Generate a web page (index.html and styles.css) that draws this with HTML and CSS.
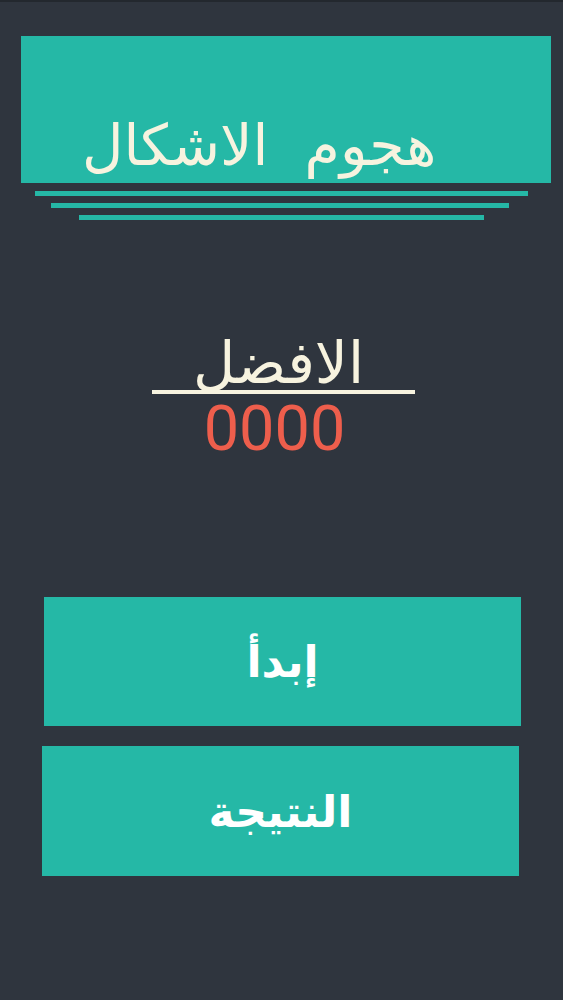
FILE: index.html
```html
<!DOCTYPE html>
<html lang="ar">
<head>
<meta charset="utf-8">
<title>هجوم الاشكال</title>
<link rel="stylesheet" href="styles.css">
</head>
<body>
<main class="screen">
  <header class="title-box">
    <h1 class="title" dir="rtl">هجوم&nbsp; الاشكال</h1>
  </header>
  <div class="stripes">
    <span class="stripe stripe-1"></span>
    <span class="stripe stripe-2"></span>
    <span class="stripe stripe-3"></span>
  </div>
  <section class="best">
    <div class="best-label" dir="rtl">الافضل</div>
    <div class="best-score">0000</div>
  </section>
  <nav class="menu">
    <button class="btn btn-start" dir="rtl">إبدأ</button>
    <button class="btn btn-score" dir="rtl">النتيجة</button>
  </nav>
</main>
</body>
</html>
```
FILE: styles.css
```css
html, body {
  margin: 0;
  padding: 0;
  background: #2f353e;
}
body {
  font-family: "DejaVu Sans", "Noto Sans", sans-serif;
  border-top: 2px solid #23282e;
  min-height: 998px;
}
.screen {
  display: flex;
  flex-direction: column;
}
.title-box {
  margin: 34px 0 0 21px;
  width: 530px;
  height: 147px;
  background: #25b8a6;
  display: flex;
  align-items: flex-end;
  justify-content: flex-start;
  box-sizing: border-box;
  padding: 0 0 0 61px;
}
.title {
  margin: 0 0 -4px 0;
  font-weight: normal;
  font-size: 57px;
  line-height: 84px;
  color: #f7f3df;
}
.stripes {
  display: flex;
  flex-direction: column;
  gap: 7px;
  margin-top: 8px;
}
.stripe {
  display: block;
  height: 5px;
  background: #25b8a6;
}
.stripe-1 { margin-left: 35px; width: 493px; }
.stripe-2 { margin-left: 51px; width: 458px; }
.stripe-3 { margin-left: 79px; width: 405px; }
.best {
  margin: 112px 0 0 152px;
  width: 263px;
  display: flex;
  flex-direction: column;
}
.best-label {
  text-align: center;
  padding-right: 10px;
  padding-top: 5px;
  font-size: 58px;
  line-height: 53px;
  color: #f7f3df;
  border-bottom: 4px solid #f7f3df;
}
.best-score {
  margin-top: 5px;
  text-align: center;
  padding-right: 18px;
  font-family: Roboto, "Liberation Sans", sans-serif;
  font-size: 63px;
  line-height: 60px;
  color: #ee5e4c;
}
.menu {
  margin-top: 138px;
  display: flex;
  flex-direction: column;
  gap: 20px;
}
.btn {
  border: 0;
  padding: 0;
  height: 129px;
  width: 477px;
  background: #25b8a6;
  color: #ffffff;
  font-family: "DejaVu Sans", "Noto Sans", sans-serif;
  font-weight: bold;
  font-size: 44px;
}
.btn-start { margin-left: 44px; }
.btn-score { margin-left: 42px; height: 130px; }
```
